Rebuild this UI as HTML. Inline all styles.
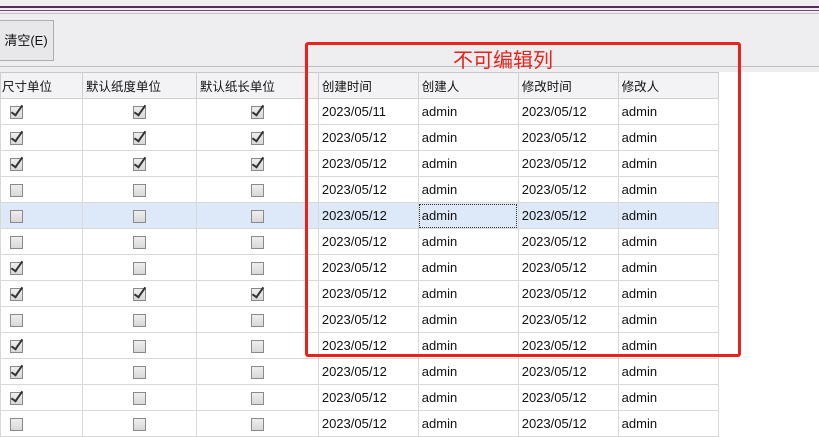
<!DOCTYPE html><html><head><style>
body{margin:0;width:819px;height:418px;overflow:hidden;background:#fff;font-family:"Liberation Sans","Noto Sans CJK SC",sans-serif;font-size:13px;color:#111;position:relative}
.top{position:absolute;left:0;top:0;width:819px;height:72px;background:#eeeef0}
.l1{position:absolute;left:0;top:6px;width:819px;height:2px;background:#5a2a5e}
.l2{position:absolute;left:0;top:10px;width:819px;height:1px;background:#7a4a7e}
.l3{position:absolute;left:0;top:13px;width:819px;height:1px;background:#c8c8c8}
.btn{position:absolute;left:-2px;top:20px;width:56px;height:41px;border:1px solid #adadad;background:#e8e8ea;box-sizing:border-box;line-height:40px;text-align:center;font-size:13px}
.l4{position:absolute;left:0;top:66px;width:819px;height:1px;background:#bfbfbf}
table{position:absolute;left:0;top:72px;border-collapse:collapse;table-layout:fixed}
td,th{height:25px;border:1px solid #d9d9d9;padding:0 0 0 3px;font-weight:normal;text-align:left;white-space:nowrap;overflow:hidden}
th{background:#f3f3f5;border-color:#d0d0d0;border-top:1px solid #c8c8c8;height:25px;font-size:12.5px}
td.c{text-align:center;padding:0}
td.f{text-align:left;padding:0 0 0 9px}
.hl td{background:#dde8f8}
.cb{display:inline-block;width:11px;height:11px;border:1px solid #8a8a8a;background:linear-gradient(#eee,#d8d8d8);vertical-align:middle;position:relative}
.ck::after{content:"";position:absolute;left:3px;top:-4px;width:4px;height:11px;border-right:2px solid #333;border-bottom:2px solid #333;transform:rotate(35deg)}
.red{position:absolute;left:305px;top:42px;width:436px;height:315px;border:3px solid #e8231c;border-radius:3px;box-sizing:border-box}
.rt{position:absolute;left:453px;top:44px;color:#e8231c;font-size:20px;font-family:"Noto Sans CJK SC",sans-serif}
.dot{outline:1px dotted #333;outline-offset:-2px}
</style></head><body>
<div class="top"></div><div class="l1"></div><div class="l2"></div><div class="l3"></div><div class="l4"></div>
<div class="btn">清空(E)</div>
<table>
<colgroup><col style="width:82px"><col style="width:114px"><col style="width:122px"><col style="width:100px"><col style="width:100px"><col style="width:100px"><col style="width:100px"><col style="width:101px"></colgroup>
<tr><th style="padding-left:1px">尺寸单位</th><th>默认纸度单位</th><th>默认纸长单位</th><th>创建时间</th><th>创建人</th><th>修改时间</th><th>修改人</th><th style="background:#fff;border:none;border-left:1px solid #d0d0d0"></th></tr>
<tr><td class="f"><span class="cb ck"></span></td><td class="c"><span class="cb ck"></span></td><td class="c"><span class="cb ck"></span></td><td>2023/05/11</td><td>admin</td><td>2023/05/12</td><td>admin</td><td style="border:none"></td></tr>
<tr><td class="f"><span class="cb ck"></span></td><td class="c"><span class="cb ck"></span></td><td class="c"><span class="cb ck"></span></td><td>2023/05/12</td><td>admin</td><td>2023/05/12</td><td>admin</td><td style="border:none"></td></tr>
<tr><td class="f"><span class="cb ck"></span></td><td class="c"><span class="cb ck"></span></td><td class="c"><span class="cb ck"></span></td><td>2023/05/12</td><td>admin</td><td>2023/05/12</td><td>admin</td><td style="border:none"></td></tr>
<tr><td class="f"><span class="cb"></span></td><td class="c"><span class="cb"></span></td><td class="c"><span class="cb"></span></td><td>2023/05/12</td><td>admin</td><td>2023/05/12</td><td>admin</td><td style="border:none"></td></tr>
<tr class="hl"><td class="f"><span class="cb"></span></td><td class="c"><span class="cb"></span></td><td class="c"><span class="cb"></span></td><td>2023/05/12</td><td class="dot">admin</td><td>2023/05/12</td><td>admin</td><td style="border:none;background:#fff"></td></tr>
<tr><td class="f"><span class="cb"></span></td><td class="c"><span class="cb"></span></td><td class="c"><span class="cb"></span></td><td>2023/05/12</td><td>admin</td><td>2023/05/12</td><td>admin</td><td style="border:none"></td></tr>
<tr><td class="f"><span class="cb ck"></span></td><td class="c"><span class="cb"></span></td><td class="c"><span class="cb"></span></td><td>2023/05/12</td><td>admin</td><td>2023/05/12</td><td>admin</td><td style="border:none"></td></tr>
<tr><td class="f"><span class="cb ck"></span></td><td class="c"><span class="cb ck"></span></td><td class="c"><span class="cb ck"></span></td><td>2023/05/12</td><td>admin</td><td>2023/05/12</td><td>admin</td><td style="border:none"></td></tr>
<tr><td class="f"><span class="cb"></span></td><td class="c"><span class="cb"></span></td><td class="c"><span class="cb"></span></td><td>2023/05/12</td><td>admin</td><td>2023/05/12</td><td>admin</td><td style="border:none"></td></tr>
<tr><td class="f"><span class="cb ck"></span></td><td class="c"><span class="cb"></span></td><td class="c"><span class="cb"></span></td><td>2023/05/12</td><td>admin</td><td>2023/05/12</td><td>admin</td><td style="border:none"></td></tr>
<tr><td class="f"><span class="cb ck"></span></td><td class="c"><span class="cb"></span></td><td class="c"><span class="cb"></span></td><td>2023/05/12</td><td>admin</td><td>2023/05/12</td><td>admin</td><td style="border:none"></td></tr>
<tr><td class="f"><span class="cb ck"></span></td><td class="c"><span class="cb"></span></td><td class="c"><span class="cb"></span></td><td>2023/05/12</td><td>admin</td><td>2023/05/12</td><td>admin</td><td style="border:none"></td></tr>
<tr><td class="f"><span class="cb"></span></td><td class="c"><span class="cb"></span></td><td class="c"><span class="cb"></span></td><td>2023/05/12</td><td>admin</td><td>2023/05/12</td><td>admin</td><td style="border:none"></td></tr>
</table>
<div class="red"></div>
<div class="rt">不可编辑列</div>
</body></html>
